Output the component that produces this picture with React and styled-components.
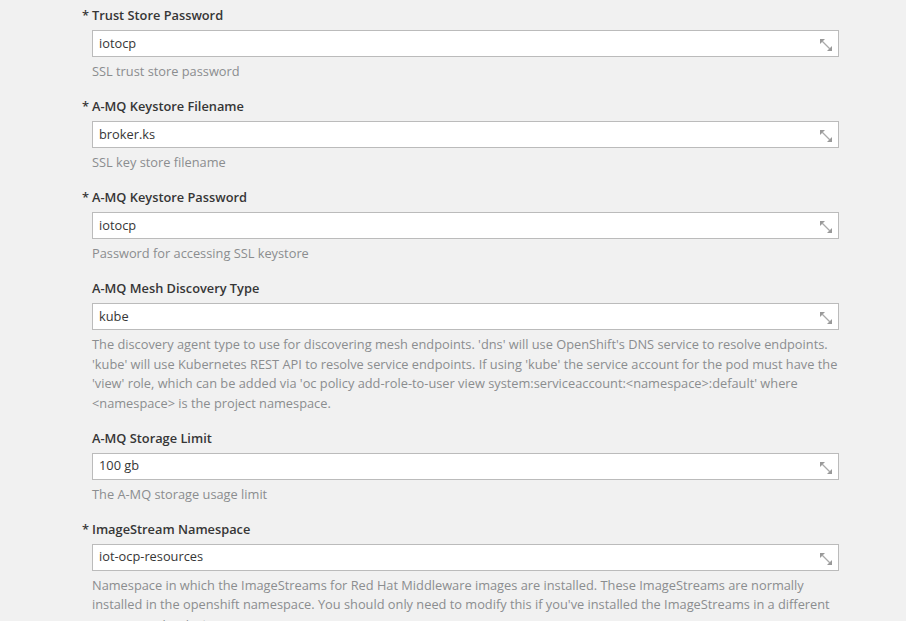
import React from "react";
import styled, { createGlobalStyle } from "styled-components";

const Global = createGlobalStyle`
  html, body { margin: 0; padding: 0; background: #f1f1f1; }
  body { font-family: "Open Sans", "Noto Sans", sans-serif; font-size: 12.8px; line-height: 1.5; color: #363636; }
`;

const Page = styled.div`
  padding: 5px 0 0 92px;
  width: 747px;
  height: 616px;
  overflow: hidden;
  box-sizing: content-box;
`;

const Group = styled.div`
  display: flex;
  flex-direction: column;
  margin-bottom: 14.5px;
`;

const Label = styled.label`
  font-weight: 600;
  color: #363636;
  line-height: 20px;
  margin-bottom: 5px;
  &::before {
    content: ${(p) => (p.$required ? '"*"' : '""')};
    display: inline-block;
    width: 10px;
    margin-left: -10px;
  }
`;

const Field = styled.div`
  display: flex;
  align-items: center;
  justify-content: space-between;
  height: 27px;
  box-sizing: border-box;
  background: #fff;
  border: 1px solid #bbbbbb;
  padding: 0 6px 0 6px;
  color: #363636;
`;

const Value = styled.span`
  line-height: 19.5px;
`;

const Grip = styled.svg`
  width: 12px;
  height: 12px;
  margin-top: 3px;
  flex: none;
`;

const Help = styled.div`
  margin-top: 5px;
  color: #8b8d8f;
  line-height: 19.5px;
`;

const ResizeIcon = () => (
  <Grip viewBox="0 0 12 12">
    <polygon points="0,0 5,0 0,5" fill="#999" />
    <polygon points="12,12 7,12 12,7" fill="#999" />
    <line x1="2" y1="2" x2="10" y2="10" stroke="#aaa" strokeWidth="1.2" />
  </Grip>
);

const fields = [
  { label: "Trust Store Password", required: true, value: "iotocp", help: "SSL trust store password" },
  { label: "A-MQ Keystore Filename", required: true, value: "broker.ks", help: "SSL key store filename" },
  { label: "A-MQ Keystore Password", required: true, value: "iotocp", help: "Password for accessing SSL keystore" },
  {
    label: "A-MQ Mesh Discovery Type",
    required: false,
    value: "kube",
    help:
      "The discovery agent type to use for discovering mesh endpoints. 'dns' will use OpenShift's DNS service to resolve endpoints. 'kube' will use Kubernetes REST API to resolve service endpoints. If using 'kube' the service account for the pod must have the 'view' role, which can be added via 'oc policy add-role-to-user view system:serviceaccount:<namespace>:default' where <namespace> is the project namespace.",
  },
  { label: "A-MQ Storage Limit", required: false, value: "100 gb", help: "The A-MQ storage usage limit" },
  {
    label: "ImageStream Namespace",
    required: true,
    value: "iot-ocp-resources",
    help:
      "Namespace in which the ImageStreams for Red Hat Middleware images are installed. These ImageStreams are normally installed in the openshift namespace. You should only need to modify this if you've installed the ImageStreams in a different namespace/project.",
  },
];

export default function App() {
  return (
    <>
      <Global />
      <Page>
        {fields.map((f) => (
          <Group key={f.label}>
            <Label $required={f.required}>{f.label}</Label>
            <Field>
              <Value>{f.value}</Value>
              <ResizeIcon />
            </Field>
            <Help>{f.help}</Help>
          </Group>
        ))}
      </Page>
    </>
  );
}
